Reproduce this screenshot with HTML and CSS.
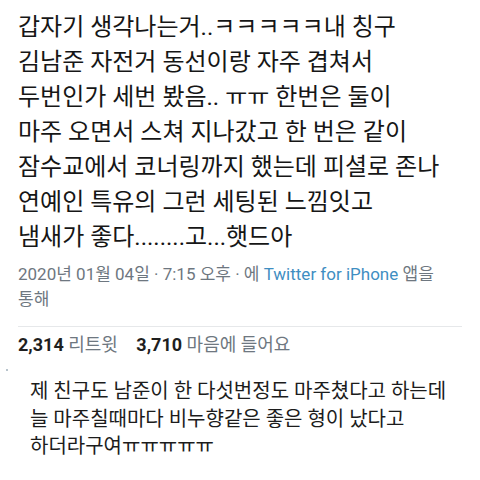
FILE: index.html
```html
<!DOCTYPE html>
<html lang="ko">

<head>
    <meta charset="UTF-8" />
    <title>트윗</title>
    <link rel="stylesheet" href="styles.css">
</head>

<body>
    <div class="tweet">
        <p class="tweet-text">
            갑자기 생각나는거..ㅋㅋㅋㅋㅋ내 칭구<br>
            김남준 자전거 동선이랑 자주 겹쳐서<br>
            두번인가 세번 봤음.. ㅠㅠ 한번은 둘이<br>
            마주 오면서 스쳐 지나갔고 한 번은 같이<br>
            잠수교에서 코너링까지 했는데 피셜로 존나<br>
            연예인 특유의 그런 세팅된 느낌잇고<br>
            냄새가 좋다........고...햇드아
        </p>

        <p class="meta">
            2020년 01월 04일 · 7:15 오후 · 에 <span class="source">Twitter for iPhone</span> 앱을<br>
            통해
        </p>

        <div class="stats">
            <span class="count">2,314</span> 리트윗
            <span class="count second">3,710</span> 마음에 들어요
        </div>
    </div>

    <div class="reply">
        <span class="dot"></span>
        <p class="reply-text">
            제 친구도 남준이 한 다섯번정도 마주쳤다고 하는데<br>
            늘 마주칠때마다 비누향같은 좋은 형이 났다고<br>
            하더라구여ㅠㅠㅠㅠㅠ
        </p>
    </div>
</body>

</html>
```

FILE: styles.css
```css
body {
    margin: 0;
    background: #fff;
    color: #1c1c1c;
    font-family: Roboto, 'Noto Sans CJK KR', sans-serif;
    width: 480px;
    height: 480px;
    overflow: hidden;
}

/* Tweet body */
.tweet {
    padding: 0 18px;
}

.tweet-text {
    margin: 0;
    padding-top: 10px;
    font-size: 24px;
    line-height: 35px;
    color: #161616;
    white-space: nowrap;
}

.meta {
    margin: 7px 0 0 0;
    padding-bottom: 14px;
    font-size: 17px;
    line-height: 25px;
    color: #6e7780;
    white-space: nowrap;
    border-bottom: 1px solid #e6e8ea;
}

.source {
    color: #3f8ec2;
}

.stats {
    padding-top: 5px;
    font-size: 18px;
    line-height: 25px;
    color: #6e7780;
    white-space: nowrap;
}

.count {
    font-weight: 700;
    color: #1f1f1f;
}

.count.second {
    margin-left: 14px;
}

/* Reply below */
.reply {
    position: relative;
    padding: 21px 0 0 30px;
}

.dot {
    position: absolute;
    left: 6px;
    top: 12px;
    width: 2px;
    height: 2px;
    background: #b8c4cc;
}

.reply-text {
    margin: 0;
    font-size: 20px;
    line-height: 27.5px;
    color: #1c1c1c;
    white-space: nowrap;
}
```
